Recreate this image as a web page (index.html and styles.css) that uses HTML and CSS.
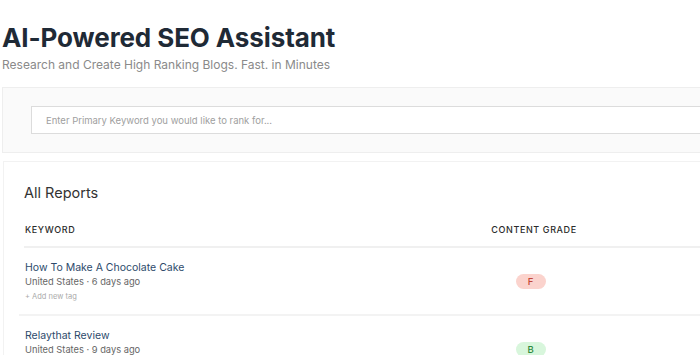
FILE: index.html
```html
<!DOCTYPE html>
<html lang="en">
<head>
  <meta charset="UTF-8">
  <meta name="viewport" content="width=device-width, initial-scale=1.0">
  <title>AI-Powered SEO Assistant</title>
  <link rel="stylesheet" href="styles.css">
</head>
<body>
  <div class="page">
    <div class="header">
      <h1>AI-Powered SEO Assistant</h1>
      <p class="subtitle">Research and Create High Ranking Blogs. Fast. in Minutes</p>
    </div>

    <div class="search-panel">
      <input type="text" class="search-input" placeholder="Enter Primary Keyword you would like to rank for...">
    </div>

    <div class="reports">
      <h2>All Reports</h2>
      <div class="table-head">
        <div class="col-keyword">KEYWORD</div>
        <div class="col-grade">CONTENT GRADE</div>
      </div>

      <div class="report-row">
        <div class="col-keyword">
          <a href="#" class="report-title">How To Make A Chocolate Cake</a>
          <div class="report-meta">United States &middot; 6 days ago</div>
          <div class="add-tag">+ Add new tag</div>
        </div>
        <div class="col-grade"><span class="grade grade-f">F</span></div>
      </div>

      <div class="report-row">
        <div class="col-keyword">
          <a href="#" class="report-title">Relaythat Review</a>
          <div class="report-meta">United States &middot; 9 days ago</div>
          <div class="add-tag">+ Add new tag</div>
        </div>
        <div class="col-grade"><span class="grade grade-b">B</span></div>
      </div>
    </div>
  </div>
</body>
</html>
```

FILE: styles.css
```css
body {
  font-family: Inter, "Noto Sans", sans-serif;
  margin: 0;
  padding: 0;
  background-color: #ffffff;
  overflow: hidden;
}
.page {
  width: 760px;
  padding-left: 2px;
}
.header {
  padding-top: 21px;
}
h1 {
  font-size: 26px;
  font-weight: 700;
  color: #1f2a36;
  margin: 0;
  line-height: 34px;
  letter-spacing: -0.1px;
}
.subtitle {
  font-size: 12px;
  color: #8a8a8a;
  margin: 2px 0 0;
  line-height: 16px;
}
.search-panel {
  margin-top: 14px;
  background: #fafafa;
  border: 1px solid #eeeeee;
  padding: 18px 0 18px 28px;
}
.search-input {
  display: block;
  width: 100%;
  height: 28px;
  box-sizing: border-box;
  border: 1px solid #dcdcdc;
  background: #ffffff;
  padding: 0 14px;
  font-family: Inter, sans-serif;
  font-size: 9.5px;
}
.search-input::placeholder {
  color: #a0a0a0;
}
.reports {
  margin-top: 8px;
  margin-left: 1px;
  border: 1px solid #f2f2f2;
  border-right: none;
  padding: 16px 0 0 20px;
}
h2 {
  font-size: 14.5px;
  font-weight: 400;
  color: #333333;
  margin: 0;
  line-height: 30px;
}
.table-head {
  display: grid;
  grid-template-columns: 466px 86px;
  margin-top: 16px;
  padding: 0 0 11px 1px;
  border-bottom: 2px solid #f0f0f0;
  font-size: 9px;
  font-weight: 500;
  letter-spacing: 0.6px;
  color: #2b2b2b;
}
.table-head .col-grade {
  text-align: center;
}
.report-row {
  display: grid;
  grid-template-columns: 466px 86px;
  margin-left: -5px;
  padding: 13px 0 12px 6px;
  border-bottom: 2px solid #f3f3f3;
}
.report-row .col-grade {
  display: flex;
  justify-content: center;
  align-items: center;
  padding-right: 7px;
}
.report-title {
  display: block;
  font-size: 10.5px;
  color: #2d4a6b;
  text-decoration: none;
  line-height: 14px;
}
.report-meta {
  font-size: 9.3px;
  color: #666666;
  margin-top: 1px;
  line-height: 12px;
}
.add-tag {
  font-size: 7.5px;
  color: #aaaaaa;
  margin-top: 4px;
  line-height: 10px;
}
.grade {
  display: inline-block;
  width: 30px;
  height: 15px;
  line-height: 15px;
  border-radius: 8px;
  text-align: center;
  font-size: 9.5px;
  font-weight: 500;
}
.grade-f {
  background: #fbd3cd;
  color: #c2473a;
}
.grade-b {
  background: #d8f6dc;
  color: #2e8a3c;
}
```
